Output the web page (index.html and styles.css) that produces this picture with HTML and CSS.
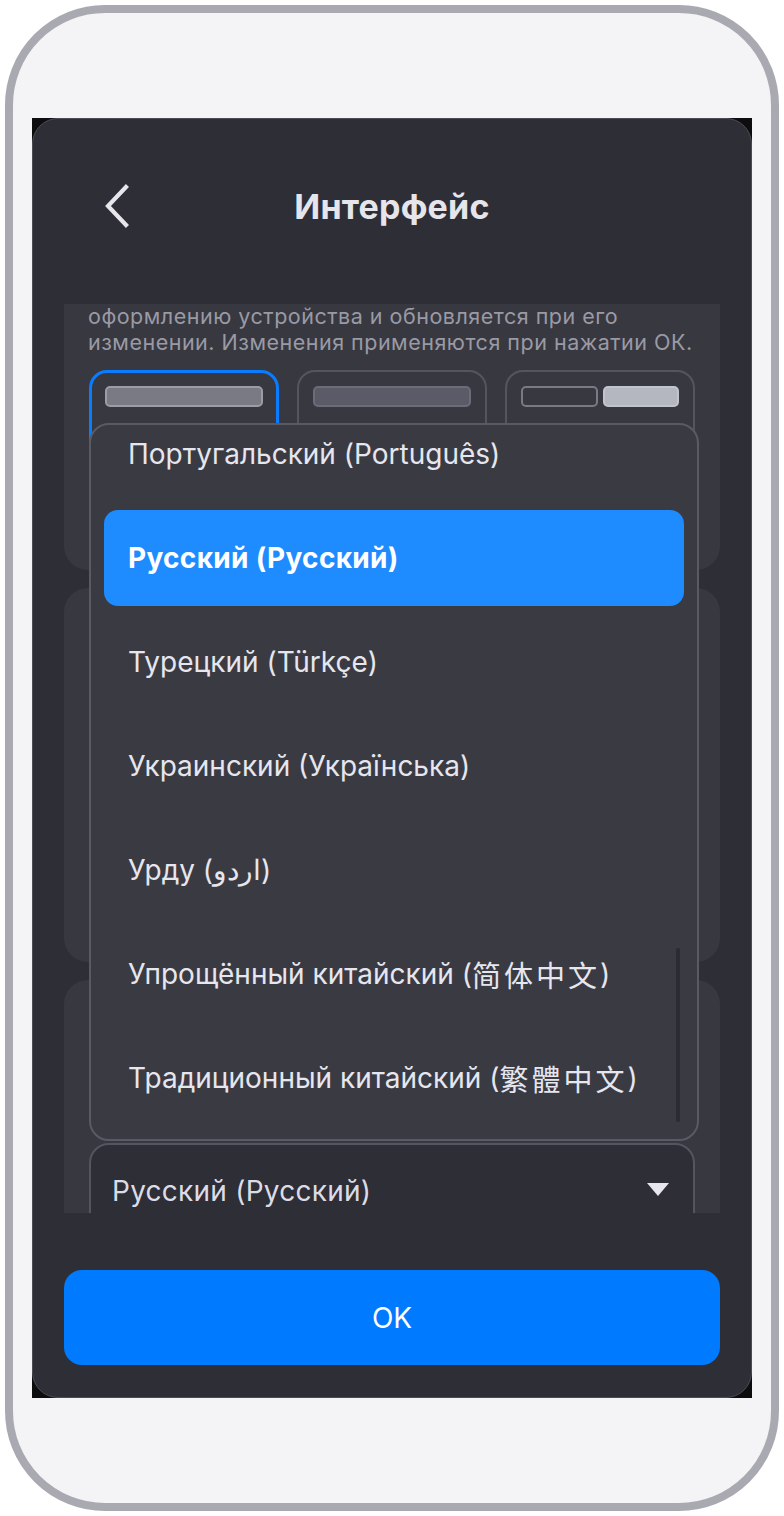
FILE: index.html
```html
<!DOCTYPE html>
<html lang="ru">
<head>
<meta charset="utf-8">
<title>Интерфейс</title>
<link rel="stylesheet" href="styles.css">
</head>
<body>
<div class="phone">
  <div class="screen">
    <div class="panel">
      <header class="header">
        <button class="back" aria-label="Назад">
          <svg width="30" height="46" viewBox="0 0 30 46"><path d="M23 4 L5 23 L23 42" fill="none" stroke="#e6e6eb" stroke-width="4.2" stroke-linecap="square"/></svg>
        </button>
        <h1 class="title">Интерфейс</h1>
      </header>
      <div class="scroll">
        <section class="card card-first">
          <p class="desc"><span class="desc-line">оформлению устройства и обновляется при его</span><span class="desc-line">изменении. Изменения применяются при нажатии ОК.</span></p>
          <div class="themes">
            <div class="theme theme-selected"><span class="bar bar-mid"></span></div>
            <div class="theme"><span class="bar bar-dark"></span></div>
            <div class="theme theme-split"><span class="bar bar-outline"></span><span class="bar bar-light"></span></div>
          </div>
        </section>
        <section class="card card-mid"></section>
        <section class="card card-last">
          <div class="select">
            <span class="select-value">Русский (Русский)</span>
            <svg class="caret" width="22" height="13" viewBox="0 0 22 13"><path d="M0 0 H22 L11 13 Z" fill="#e6e6ec"/></svg>
          </div>
        </section>
        <div class="menu">
          <ul class="menu-list">
            <li class="item">Португальский (Português)</li>
            <li class="item item-active">Русский (Русский)</li>
            <li class="item">Турецкий (Türkçe)</li>
            <li class="item">Украинский (Українська)</li>
            <li class="item">Урду (اردو)</li>
            <li class="item">Упрощённый китайский (<span class="cjk">简体中文</span>)</li>
            <li class="item">Традиционный китайский (<span class="cjk">繁體中文</span>)</li>
          </ul>
          <span class="scrollbar"></span>
        </div>
      </div>
      <button class="ok">OK</button>
    </div>
  </div>
</div>
</body>
</html>
```
FILE: styles.css
```css
* { box-sizing: border-box; }
html, body { margin: 0; padding: 0; background: #ffffff; }
body {
  font-family: Inter, "Noto Sans CJK SC", "Noto Sans", sans-serif;
  width: 784px;
  height: 1516px;
  overflow: hidden;
}
.phone {
  margin: 5px;
  width: 774px;
  height: 1506px;
  border: 8px solid #a9a9b1;
  border-radius: 100px;
  background: #f4f4f6;
  padding: 105px 0 0 19px;
}
.screen {
  width: 720px;
  height: 1280px;
  background: #0d0d0f;
}
.panel {
  width: 720px;
  height: 1280px;
  background: #2e2e36;
  border: 1px solid #4c4c56;
  border-radius: 26px;
  display: flex;
  flex-direction: column;
  padding: 0 31px;
}
.header {
  height: 185px;
  flex: none;
  display: flex;
  align-items: center;
  justify-content: center;
  position: relative;
  padding-bottom: 10px;
}
.back {
  position: absolute;
  left: 39px;
  top: 64px;
  background: none;
  border: 0;
  padding: 0;
  width: 30px;
  height: 46px;
}
.back svg { display: block; }
.title {
  margin: 0;
  font-size: 34px;
  font-weight: 700;
  color: #e5e5eb;
  letter-spacing: 0.2px;
}
.scroll {
  height: 909px;
  flex: none;
  overflow: hidden;
  position: relative;
  display: flex;
  flex-direction: column;
  gap: 18px;
}
.card {
  background: #383840;
  border-radius: 24px;
  flex: none;
}
.card-first {
  border-radius: 0 0 24px 24px;
  height: 266px;
  padding: 0 25px 0 24px;
}
.desc {
  margin: 0;
  font-size: 21.5px;
  line-height: 25px;
  color: #9a9aa5;
  letter-spacing: 0.5px;
}
.desc-line {
  display: block;
  white-space: nowrap;
}
.desc-line + .desc-line { margin-top: 1px; }
.themes {
  margin-top: 15px;
  display: flex;
  gap: 18px;
  padding-left: 1px;
}
.theme {
  width: 190px;
  height: 170px;
  border: 2px solid #55555f;
  border-radius: 18px;
  padding: 14px 14px 0;
  display: flex;
  gap: 5px;
}
.theme-selected {
  border: 3px solid #0a7cff;
  padding: 13px 13px 0;
}
.bar {
  display: block;
  height: 21px;
  flex: 1;
  border-radius: 5px;
  border: 2px solid #9a9aa4;
}
.bar-mid { background: #7a7a85; border-color: #9c9ca6; }
.bar-dark { background: #5b5b67; border-color: #6c6c78; }
.bar-outline { background: #383840; border-color: #7a7a85; }
.bar-light { background: #b4b6c0; border-color: #c2c4cd; }
.card-mid { height: 374px; }
.card-last {
  height: 300px;
  padding: 163px 25px 0;
}
.select {
  height: 96px;
  border: 2px solid #55555f;
  border-radius: 20px;
  background: #2e2e36;
  display: flex;
  align-items: center;
  justify-content: space-between;
  padding: 0 24px 0 21px;
}
.select-value {
  font-size: 28px;
  color: #dcdce6;
  letter-spacing: 0.25px;
}
.caret { display: block; margin-top: -4px; }
.menu {
  position: absolute;
  left: 25px;
  top: 119px;
  width: 610px;
  height: 718px;
  background: #3a3a43;
  border: 2px solid #5a5a65;
  border-radius: 20px;
  overflow: hidden;
  padding: 0 13px;
}
.menu-list {
  list-style: none;
  margin: -19px 0 0;
  padding: 0;
  display: flex;
  flex-direction: column;
  gap: 8px;
}
.item {
  height: 96px;
  border-radius: 14px;
  display: flex;
  align-items: center;
  padding-left: 24px;
  font-size: 28px;
  color: #e6e6ee;
  flex: none;
  white-space: pre;
}
.cjk {
  font-size: 29px;
  letter-spacing: 3px;
}
.item-active {
  background: #1e8bff;
  color: #ffffff;
  font-weight: 700;
  letter-spacing: 0.3px;
}
.scrollbar {
  position: absolute;
  right: 17px;
  top: 523px;
  width: 4px;
  height: 174px;
  background: #2b2b33;
  border-radius: 2px;
}
.ok {
  margin-top: 57px;
  height: 95px;
  flex: none;
  width: 100%;
  border: 0;
  border-radius: 18px;
  background: #007aff;
  color: #ffffff;
  font-family: Inter, sans-serif;
  font-size: 28px;
}
```
